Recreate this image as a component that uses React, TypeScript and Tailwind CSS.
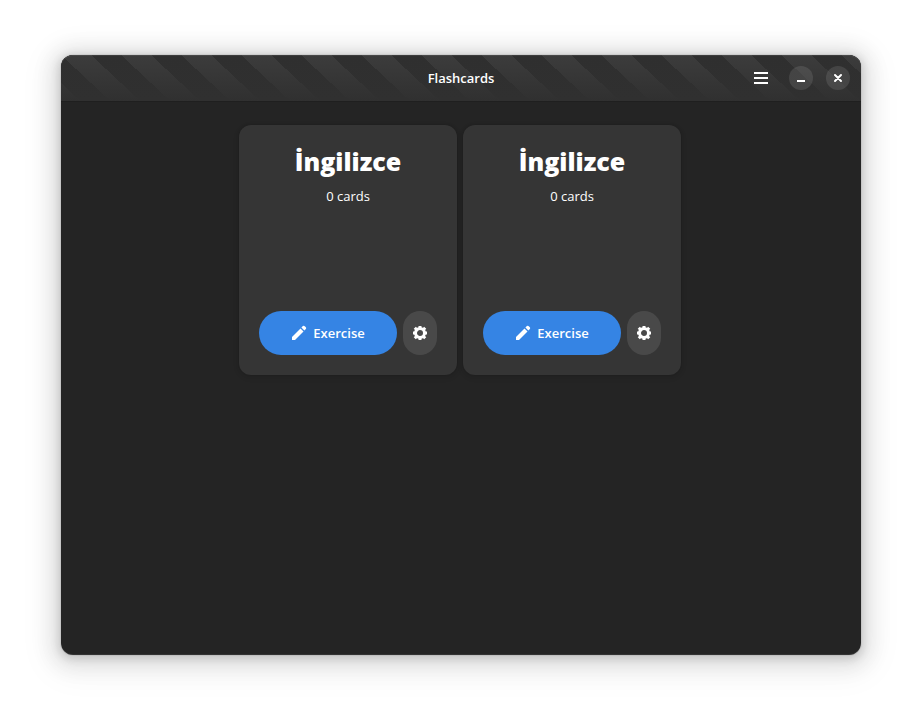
import React from "react";

type Deck = { id: number; name: string; cards: number };

const decks: Deck[] = [
  { id: 1, name: "İngilizce", cards: 0 },
  { id: 2, name: "İngilizce", cards: 0 },
];

function PencilIcon() {
  return (
    <svg viewBox="0 0 16 16" className="size-4" fill="currentColor" aria-hidden="true">
      <path d="M9.500 3.500 12.500 6.500 4 15H1v-3z" />
      <path d="M10.400 2.600 11.900 1.100Q13 .3 14 1.400l.6.6Q15.700 3 14.900 4.100L13.400 5.600z" />
    </svg>
  );
}

function GearIcon() {
  return (
    <svg viewBox="0 0 16 16" className="size-4" aria-hidden="true">
      <circle cx="8" cy="8" r="4.500" fill="none" stroke="currentColor" strokeWidth="3" />
      <g stroke="currentColor" strokeWidth="3" strokeLinecap="butt">
        <path d="M8 1v2M8 13v2M1 8h2M13 8h2M2.800 2.800l1.700 1.700M11.500 11.500l1.700 1.700M2.800 13.200l1.700-1.700M11.500 4.500l1.700-1.700" />
      </g>
    </svg>
  );
}

function DeckCard({ deck }: { deck: Deck }) {
  return (
    <article className="flex min-h-[250px] w-[218px] flex-col rounded-xl bg-[#353535] px-5 pt-4 pb-5 text-center shadow-[0_0_0_1px_rgba(0,0,0,0.03),0_1px_3px_1px_rgba(0,0,0,0.07),0_2px_6px_2px_rgba(0,0,0,0.03)]">
      <h2 className="text-[25px] leading-10 font-extrabold">{deck.name}</h2>
      <p className="mt-1.5 text-[13px] leading-[18px]">{deck.cards} cards</p>
      <div className="mt-auto flex gap-1.5">
        <button
          type="button"
          className="flex h-11 flex-1 items-center justify-center gap-1.5 rounded-full bg-[#3584e4] text-[13px] leading-[18px] font-semibold"
        >
          <PencilIcon />
          Exercise
        </button>
        <button
          type="button"
          aria-label="Deck settings"
          className="flex h-11 w-[34px] items-center justify-center rounded-full bg-[#494949]"
        >
          <GearIcon />
        </button>
      </div>
    </article>
  );
}

export default function App() {
  return (
    <div className="flex min-h-screen bg-white px-[61px] pt-[55px] pb-[67px] font-['Open_Sans','Noto_Sans',sans-serif] text-white">
      <div className="flex flex-1 flex-col rounded-xl bg-[#242424] shadow-[0_0_0_1px_rgba(0,0,0,0.05),0_2px_8px_2px_rgba(0,0,0,0.13),0_3px_20px_10px_rgba(0,0,0,0.09),0_6px_32px_16px_rgba(0,0,0,0.04)]">
        <header className="grid h-[47px] grid-cols-[1fr_auto_1fr] items-center rounded-t-xl border-b border-[#1f1f1f] bg-[#303030] bg-[image:linear-gradient(to_top,#303030,transparent),linear-gradient(to_top_right,#3c3c3c_25%,#2f2f2f_25%,#2f2f2f_50%,#3c3c3c_50%,#3c3c3c_75%,#2f2f2f_75%)] bg-[size:100%_100%,60px_56px] px-[11px] shadow-[inset_0_1px_0_rgba(255,255,255,0.07)]">
          <span />
          <h1 className="text-[13px] leading-[18px] font-semibold">Flashcards</h1>
          <div className="flex items-center justify-end">
            <button type="button" aria-label="Main menu" className="mr-4 flex size-6 items-center justify-center">
              <svg viewBox="0 0 16 16" className="size-4" fill="currentColor" aria-hidden="true">
                <path d="M1 2h14v2H1zM1 7h14v2H1zM1 12h14v2H1z" />
              </svg>
            </button>
            <button type="button" aria-label="Minimize" className="mr-[13px] flex size-6 items-center justify-center rounded-full bg-white/10">
              <svg viewBox="0 0 16 16" className="size-4" fill="currentColor" aria-hidden="true">
                <path d="M4 10h8v2H4z" />
              </svg>
            </button>
            <button type="button" aria-label="Close" className="flex size-6 items-center justify-center rounded-full bg-white/10">
              <svg viewBox="0 0 16 16" className="size-4" stroke="currentColor" strokeWidth="2" strokeLinecap="round" aria-hidden="true">
                <path d="M5 5l6 6M11 5l-6 6" />
              </svg>
            </button>
          </div>
        </header>
        <main className="flex flex-1 flex-wrap content-start justify-center gap-1.5 rounded-b-xl pt-[23px] pr-[26px] pb-6 pl-6 shadow-[inset_0_-1px_0_rgba(255,255,255,0.07)]">
          {decks.map((deck) => (
            <DeckCard key={deck.id} deck={deck} />
          ))}
        </main>
      </div>
    </div>
  );
}
